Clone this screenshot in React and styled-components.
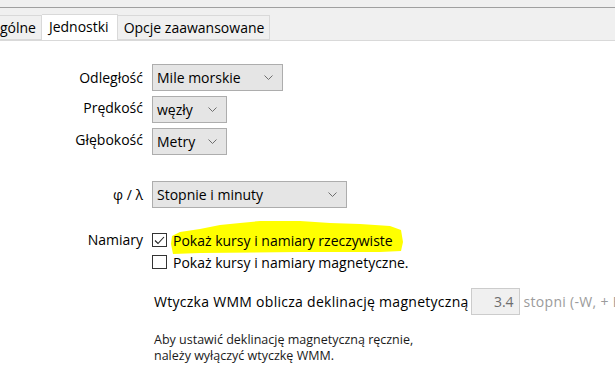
import React from 'react';
import styled, { createGlobalStyle } from 'styled-components';

const GlobalStyle = createGlobalStyle`
  html, body {
    margin: 0;
    padding: 0;
    background: #ffffff;
    overflow: hidden;
  }

  body {
    font-family: "Open Sans", "Liberation Sans", sans-serif;
    font-size: 14px;
    color: #000000;
  }
`;

const Window = styled.div`
  width: 615px;
  height: 390px;
  display: flex;
  flex-direction: column;
  background: #ffffff;
  overflow: hidden;
`;

const TopBand = styled.div`
  height: 7px;
  flex: none;
  background: #f0f0f0;
  border-bottom: 1px solid #a0a0a0;
`;

const TabStrip = styled.div`
  height: 32px;
  flex: none;
  display: flex;
  align-items: flex-end;
  background: #f0f0f0;
  border-bottom: 1px solid #d9d9d9;
  overflow: hidden;
`;

const Tab = styled.div`
  flex: none;
  box-sizing: border-box;
  height: ${p => (p.active ? '27px' : '25px')};
  margin-bottom: ${p => (p.active ? '-1px' : '0')};
  margin-left: ${p => p.offset || '0'};
  padding: ${p => (p.active ? '0 8px 3px 7px' : '0 5px 0 6px')};
  display: flex;
  align-items: center;
  background: ${p => (p.active ? '#ffffff' : '#f0f0f0')};
  border: 1px solid #d9d9d9;
  border-bottom: ${p => (p.active ? 'none' : '1px solid #d9d9d9')};
  border-left: ${p => (p.joined ? 'none' : '1px solid #d9d9d9')};
  white-space: nowrap;
  position: relative;
  z-index: ${p => (p.active ? 1 : 0)};
`;

const Content = styled.div`
  flex: 1;
  padding-top: 23px;
`;

const Form = styled.div`
  display: grid;
  grid-template-columns: 143px 1fr;
  column-gap: 9px;
  align-items: center;
`;

const Label = styled.div`
  text-align: right;
  white-space: nowrap;
  align-self: ${p => p.top ? 'start' : 'center'};
  margin-top: ${p => p.top ? '1px' : '0'};
`;

const Cell = styled.div`
  margin-top: ${p => p.gap || '0'};
  display: flex;
  flex-direction: column;
`;

const Spacer = styled.div`
  grid-column: 1 / span 2;
  height: ${p => p.h};
`;

const SelectBox = styled.div`
  box-sizing: border-box;
  width: ${p => p.w};
  height: 27px;
  display: flex;
  align-items: center;
  justify-content: space-between;
  padding: 0 9px 0 4px;
  background: #e5e5e5;
  border: 1px solid #adadad;
  white-space: nowrap;
`;

const Chevron = () => (
  <svg width="9" height="5" viewBox="0 0 9 5">
    <path d="M0.5 0.5 L4.5 4.5 L8.5 0.5" fill="none" stroke="#6e6e6e" strokeWidth="1" />
  </svg>
);

const Select = ({ w, value }) => (
  <SelectBox w={w}>
    <span>{value}</span>
    <Chevron />
  </SelectBox>
);

const CheckRow = styled.div`
  height: 22px;
  display: flex;
  align-items: center;
  gap: 6px;
  white-space: nowrap;
  position: relative;
`;

const Box = styled.div`
  box-sizing: border-box;
  width: 15px;
  height: 14px;
  flex: none;
  border: 1px solid #333333;
  background: #ffffff;
  display: flex;
  align-items: center;
  justify-content: center;
`;

const CheckText = styled.span`
  position: relative;
  isolation: isolate;
`;

const Marker = styled.svg`
  position: absolute;
  left: -3px;
  top: -12px;
  z-index: -1;
`;

const Highlight = () => (
  <Marker width="236" height="37" viewBox="0 0 236 37">
    <path
      d="M2 17 L10 13 L30 10 L50 6 L70 4 L90 2 L130 2 L160 4 L190 5 L220 7 L231 11 L233 23 L231 32 L210 33 L130 33 L30 34 L3 35 L1 25 Z"
      fill="#ffff00"
    />
  </Marker>
);

const Checkbox = ({ checked, marked, children }) => (
  <CheckRow>
    <Box>
      {checked && (
        <svg width="11" height="9" viewBox="0 0 11 9">
          <path d="M1 4.5 L4 7.5 L10 1" fill="none" stroke="#222" strokeWidth="1.1" />
        </svg>
      )}
    </Box>
    <CheckText>
      {marked && <Highlight />}
      {children}
    </CheckText>
  </CheckRow>
);

const WmmRow = styled.div`
  grid-column: 2;
  margin-top: 15px;
  margin-left: 2px;
  display: flex;
  align-items: center;
  white-space: nowrap;
`;

const WmmText = styled.span`
  letter-spacing: 0.28px;
`;

const NumberField = styled.div`
  box-sizing: border-box;
  width: 49px;
  height: 27px;
  margin-left: 2px;
  padding-right: 5px;
  display: flex;
  align-items: center;
  justify-content: flex-end;
  background: #f0f0f0;
  border: 1px solid #cccccc;
  color: #6d6d6d;
`;

const Unit = styled.span`
  margin-left: 4px;
  color: #9b9b9b;
  letter-spacing: 0.3px;
`;

const Note = styled.div`
  grid-column: 2;
  margin: 17px 0 0 2px;
  font-size: 12.5px;
  line-height: 16px;
  color: #1a1a1a;
`;

export default function App() {
  return (
    <Window>
      <GlobalStyle />
      <TopBand />
      <TabStrip>
        <Tab offset="-18px">Ogólne</Tab>
        <Tab active joined>Jednostki</Tab>
        <Tab joined>Opcje zaawansowane</Tab>
      </TabStrip>
      <Content>
        <Form>
          <Label>Odległość</Label>
          <Cell><Select w="131px" value="Mile morskie" /></Cell>
          <Label>Prędkość</Label>
          <Cell gap="5px"><Select w="75px" value="węzły" /></Cell>
          <Label>Głębokość</Label>
          <Cell gap="5px"><Select w="75px" value="Metry" /></Cell>
          <Spacer h="26px" />
          <Label>φ / λ</Label>
          <Cell><Select w="195px" value="Stopnie i minuty" /></Cell>
          <Spacer h="21px" />
          <Label top>Namiary</Label>
          <Cell>
            <Checkbox checked marked>Pokaż kursy i namiary rzeczywiste</Checkbox>
            <Checkbox>Pokaż kursy i namiary magnetyczne.</Checkbox>
          </Cell>
          <WmmRow>
            <WmmText>Wtyczka WMM oblicza deklinację magnetyczną</WmmText>
            <NumberField>3.4</NumberField>
            <Unit>stopni (-W, + E)</Unit>
          </WmmRow>
          <Note>
            Aby ustawić deklinację magnetyczną ręcznie,
            <br />
            należy wyłączyć wtyczkę WMM.
          </Note>
        </Form>
      </Content>
    </Window>
  );
}
